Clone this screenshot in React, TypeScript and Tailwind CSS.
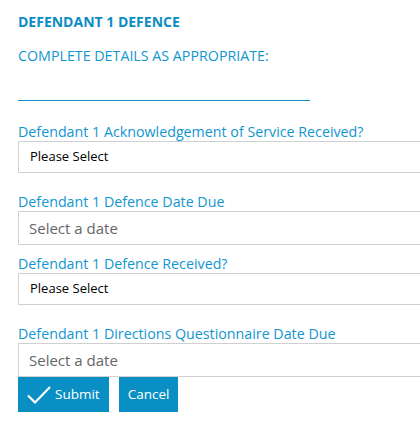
const font = { fontFamily: '"Open Sans", "Noto Sans", sans-serif' };

function Label({ children }: { children: string }) {
  return <div className="text-[14.25px] leading-[19px] text-[#1296d0]">{children}</div>;
}

function SelectBox() {
  return (
    <div className="flex h-[32px] w-[410px] items-center border border-[#d0d0d0] bg-white pl-[11px] text-[13px] text-black">
      Please Select
    </div>
  );
}

function DateBox() {
  return (
    <div className="flex h-[34px] w-[410px] items-center border border-[#d0d0d0] bg-white pl-[10px] text-[15px] text-[#666]">
      Select a date
    </div>
  );
}

export default function App() {
  return (
    <div className="h-[423px] w-[420px] overflow-hidden bg-white pl-[18px] pt-[13px]" style={font}>
      <h2 className="text-[14px] font-bold leading-[18px] text-[#0b8cc5]">DEFENDANT 1 DEFENCE</h2>
      <p className="mt-[16px] text-[14.25px] leading-[18px] text-[#1296d0]">COMPLETE DETAILS AS APPROPRIATE:</p>
      <div className="mt-[35px] h-px w-[292px] bg-[#0f8fc4]" />

      <div className="mt-[21px]">
        <Label>Defendant 1 Acknowledgement of Service Received?</Label>
        <SelectBox />
      </div>

      <div className="mt-[19px]">
        <Label>Defendant 1 Defence Date Due</Label>
        <DateBox />
      </div>

      <div className="mt-[9px]">
        <Label>Defendant 1 Defence Received?</Label>
        <SelectBox />
      </div>

      <div className="mt-[19px]">
        <Label>Defendant 1 Directions Questionnaire Date Due</Label>
        <DateBox />
      </div>

      <div className="flex gap-[10px]">
        <button className="flex h-[35px] w-[91px] items-center gap-[4px] bg-[#0a8fc4] pl-[9px] text-[13.5px] text-white">
          <svg width="24" height="20" viewBox="0 0 24 20" fill="none" stroke="currentColor" strokeWidth="2.2">
            <path d="M1 10.5 8 17.5 23 2" />
          </svg>
          Submit
        </button>
        <button className="flex h-[35px] w-[59px] items-center justify-center bg-[#0a8fc4] text-[13.5px] text-white">
          Cancel
        </button>
      </div>
    </div>
  );
}
